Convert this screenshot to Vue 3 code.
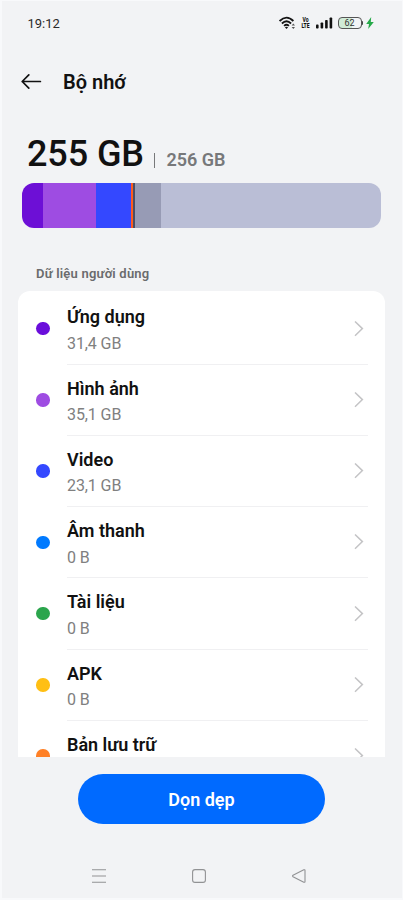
<script setup>
const segments = [
  { color: '#6d0fd6', width: 21 },
  { color: '#9e4ce2', width: 53 },
  { color: '#3448ff', width: 35 },
  { color: '#ff5b1c', width: 2 },
  { color: '#4b4f66', width: 2 },
  { color: '#979bb5', width: 26 },
  { color: '#babed6', width: 220 },
]
const rows = [
  { name: 'Ứng dụng', size: '31,4 GB', color: '#6a0edb' },
  { name: 'Hình ảnh', size: '35,1 GB', color: '#9e4ce2' },
  { name: 'Video', size: '23,1 GB', color: '#3448ff' },
  { name: 'Âm thanh', size: '0 B', color: '#007aff' },
  { name: 'Tài liệu', size: '0 B', color: '#2ba54c' },
  { name: 'APK', size: '0 B', color: '#ffbf14' },
  { name: 'Bản lưu trữ', size: '', color: '#ff8026' },
]
</script>

<template>
  <main class="screen">
    <div class="status">
      <span class="time">19:12</span>
      <div class="status-icons">
        <svg class="wifi" width="17" height="14" viewBox="0 0 17 14" fill="none" stroke="#141414" stroke-width="1.8">
          <path d="M.6 5Q7.5-1.9 14.4 5M2.9 7.5Q7.5 3 12.1 7.5M5.1 9.9Q7.5 7.7 9.9 9.9" />
          <path d="M5.9 11.3L7.5 13L9.1 11.3Q7.5 10.2 5.9 11.3Z" fill="#141414" stroke="none" />
          <path d="M12.6 9.6L14.3 7.6L16 9.6ZM12.6 10.9L14.3 12.9L16 10.9Z" fill="#555" stroke="none" />
        </svg>
        <span class="volte"><span>Vo</span><span>LTE</span></span>
        <svg class="signal" width="17" height="12" viewBox="0 0 17 12" fill="#111">
          <rect x="0" y="7.6" width="2.6" height="4" rx=".8" />
          <rect x="4.6" y="5.4" width="2.6" height="6.2" rx=".8" />
          <rect x="9.1" y="3" width="2.6" height="8.6" rx=".8" />
          <rect x="13.6" y=".4" width="2.6" height="11.2" rx=".8" />
        </svg>
        <span class="battery">62</span>
        <svg class="bolt" width="8" height="12" viewBox="0 0 8 12" fill="#26a949">
          <path d="M5.2 0L.2 7H3L2.2 12L7.8 4.9H4.8Z" />
        </svg>
      </div>
    </div>

    <header class="header">
      <svg width="21" height="16" viewBox="0 0 21 16" fill="none" stroke="#111" stroke-width="1.7" stroke-linecap="round" stroke-linejoin="round">
        <path d="M19.4 7.5H1.2M7.8 .9L1.2 7.5L7.8 14.1" />
      </svg>
      <h1>Bộ nhớ</h1>
    </header>

    <div class="usage">
      <span class="used">255 GB</span>
      <span class="divider"></span>
      <span class="total">256 GB</span>
    </div>
    <div class="bar">
      <i v-for="s in segments" :key="s.color" :style="{ flexGrow: s.width, background: s.color }"></i>
    </div>

    <h2>Dữ liệu người dùng</h2>
    <section class="list">
      <div v-for="r in rows" :key="r.name" class="row">
        <i class="dot" :style="{ background: r.color }"></i>
        <div class="body">
          <div class="texts">
            <span class="name">{{ r.name }}</span>
            <span v-if="r.size" class="size">{{ r.size }}</span>
          </div>
          <svg class="chevron" width="10" height="16" viewBox="0 0 10 16" fill="none" stroke="#c4c4c6" stroke-width="1.5">
            <path d="M1 .5L8.4 7.6L1 14.7" />
          </svg>
        </div>
      </div>
    </section>

    <button class="clean">Dọn dẹp</button>

    <nav class="nav">
      <svg width="14" height="14" viewBox="0 0 14 14" stroke="#919294" stroke-width="1.1">
        <path d="M0 .8H14M0 7H14M0 13.2H14" />
      </svg>
      <svg width="14" height="14" viewBox="0 0 14 14" fill="none" stroke="#919294" stroke-width="1.1">
        <rect x=".6" y=".6" width="12.8" height="12.8" rx="2.4" />
      </svg>
      <svg width="14" height="14" viewBox="0 0 14 14" fill="none" stroke="#919294" stroke-width="1.1" stroke-linejoin="round">
        <path d="M1 6.3L11.8.8Q13 .4 13 1.6V12.4Q13 13.6 11.8 13.2L1 7.7Q.1 7 1 6.3Z" />
      </svg>
    </nav>
  </main>
</template>

<style>
body { margin: 0; background: #f2f3f5; }
</style>

<style scoped>
.screen {
  box-sizing: border-box;
  width: 403px;
  height: 900px;
  display: flex;
  flex-direction: column;
  overflow: hidden;
  background: #f2f3f5;
  border: solid #f8f9fb;
  border-width: 1px 1px 2px 2px;
  font-family: Roboto, sans-serif;
  color: #111;
}
.status {
  height: 44px;
  flex: none;
  display: flex;
  align-items: center;
  justify-content: space-between;
  padding: 0 28.5px 0 25.5px;
}
.time { font-size: 13px; color: #2a2a2a; }
.status-icons { display: flex; align-items: center; }
.wifi { margin-right: 5px; }
.volte {
  width: 9px;
  height: 12px;
  display: flex;
  flex-direction: column;
  align-items: center;
  justify-content: center;
  font-size: 7px;
  line-height: 6px;
  font-weight: 800;
  margin-right: 6px;
  transform: scaleX(.72);
}
.signal { margin-right: 5px; }
.battery {
  position: relative;
  box-sizing: border-box;
  width: 24px;
  height: 12px;
  border: 1px solid #555;
  border-radius: 4px;
  background: linear-gradient(90deg, #d0ebd7 60%, #f2f3f5 60%);
  font-size: 9px;
  line-height: 10.5px;
  text-align: center;
  color: #333;
  margin-right: 4px;
}
.battery::after {
  content: '';
  position: absolute;
  right: -2.5px;
  top: 3px;
  width: 1.5px;
  height: 4px;
  background: #444;
  border-radius: 0 1px 1px 0;
}
.header {
  height: 74px;
  flex: none;
  display: flex;
  align-items: center;
  padding-left: 19px;
  gap: 21px;
}
h1 { margin: 0; font-size: 20px; line-height: 26px; font-weight: 600; }
.usage {
  height: 63px;
  flex: none;
  display: flex;
  align-items: baseline;
  padding: 14px 0 0 25px;
  box-sizing: border-box;
}
.used { font-size: 36px; line-height: 42px; font-weight: 550; letter-spacing: -.1px; }
.divider { width: 1.5px; height: 15px; background: #77787a; margin: 0 11px 0 10px; transform: translateY(2px); }
.total { font-size: 18px; font-weight: 600; color: #77787a; }
.bar {
  display: flex;
  flex: none;
  height: 45px;
  width: 358.5px;
  margin: .5px 0 0 20px;
  border-radius: 12px;
  overflow: hidden;
}
.bar i { flex: 0 0 0; }
h2 {
  margin: 37px 0 0 34px;
  font-size: 13px;
  line-height: 18px;
  font-weight: 600;
  letter-spacing: .2px;
  color: #6a6b6d;
}
.list {
  flex: none;
  box-sizing: border-box;
  height: 466px;
  width: 367px;
  margin: 8.5px 0 0 16px;
  padding: 2.4px 17px 0 18px;
  background: #fff;
  border-radius: 12px 12px 0 0;
  overflow: hidden;
}
.row { display: flex; align-items: center; height: 71.25px; }
.dot { width: 13.5px; height: 13.5px; border-radius: 50%; margin: 0 17.5px 1px 0; flex: none; }
.body {
  flex: 1;
  box-sizing: border-box;
  height: 100%;
  display: flex;
  align-items: center;
  justify-content: space-between;
  padding-right: 4.5px;
  border-bottom: 1px solid #f0f0f2;
}
.texts { align-self: flex-start; padding-top: 11.9px; display: flex; flex-direction: column; gap: 4.5px; }
.name { font-size: 18px; line-height: 24px; font-weight: 600; }
.size { font-size: 16px; line-height: 20px; letter-spacing: -.1px; color: #808080; }
.clean {
  flex: none;
  width: 247px;
  height: 50px;
  margin: 17px 0 0 76px;
  padding: 1px 0 0;
  border: 0;
  border-radius: 25px;
  background: #006aff;
  color: #fff;
  font: 600 18px/49px Roboto, sans-serif;
}
.nav {
  display: flex;
  justify-content: space-between;
  margin: 44.5px 96.5px 0 90px;
}
</style>
